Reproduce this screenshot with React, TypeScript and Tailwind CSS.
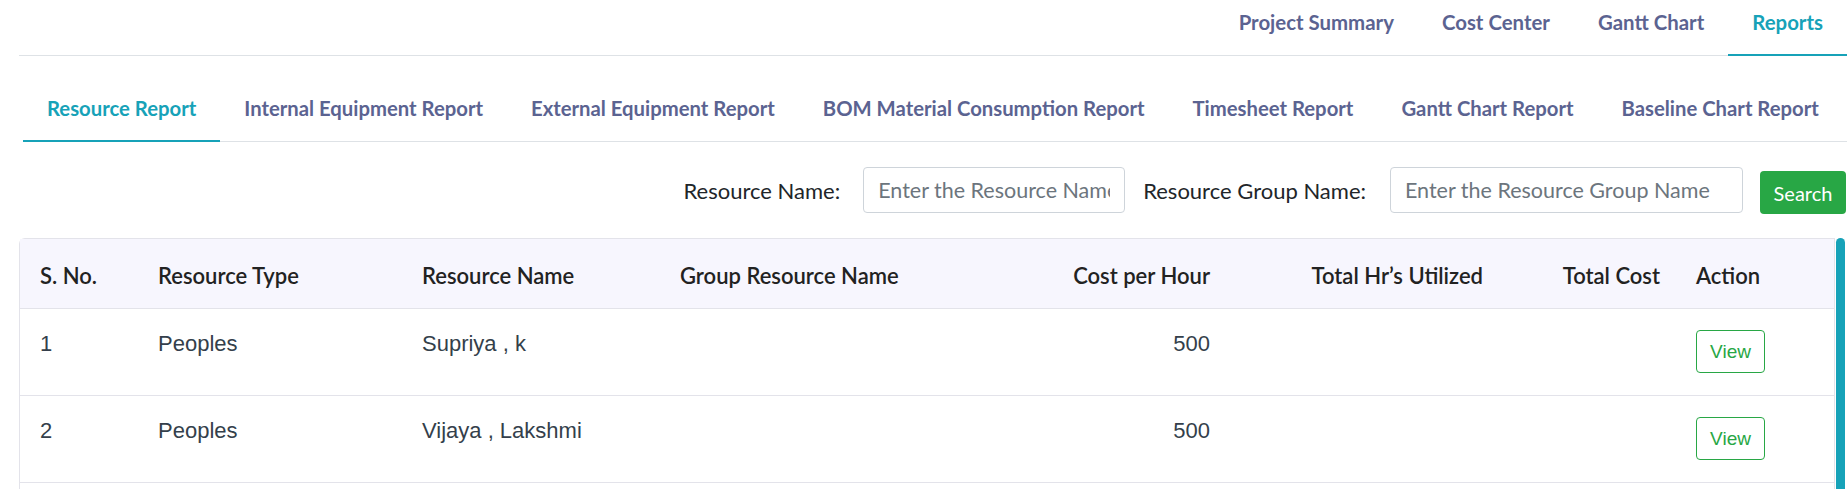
import React from 'react'

// Report page: top project nav, report tabs, filter row and resource table
const topTabs = ['Project Summary', 'Cost Center', 'Gantt Chart', 'Reports']
const reportTabs = [
  'Resource Report',
  'Internal Equipment Report',
  'External Equipment Report',
  'BOM Material Consumption Report',
  'Timesheet Report',
  'Gantt Chart Report',
  'Baseline Chart Report',
]

const rows = [
  { no: 1, type: 'Peoples', name: 'Supriya , k', group: '', cost: '500', hrs: '', total: '' },
  { no: 2, type: 'Peoples', name: 'Vijaya , Lakshmi', group: '', cost: '500', hrs: '', total: '' },
]

const grid = 'grid grid-cols-[118px_264px_258px_241px_329px_273px_177px_1fr]'

export default function App() {
  return (
    <div className="min-h-screen bg-white pl-[19px] font-['Lato',sans-serif]">
      {/* project nav */}
      <div className="flex h-[56px] justify-end border-b border-[#dee2e6]">
        {topTabs.map((t) => {
          const active = t === 'Reports'
          return (
            <div
              key={t}
              className={
                active
                  ? '-mb-px border-b-2 border-[#17a2b8] px-6 pt-[10px] text-[20.4px] leading-6 font-bold text-[#17a2b8]'
                  : '-mb-px border-b-2 border-transparent px-6 pt-[10px] text-[20.4px] leading-6 font-bold text-[#5b6391]'
              }
            >
              {t}
            </div>
          )
        })}
      </div>

      {/* report tabs */}
      <div className="mt-[30px] ml-[4px] flex border-b border-[#dee2e6]">
        {reportTabs.map((t, i) => (
          <div
            key={t}
            className={
              i === 0
                ? '-mb-px border-b-2 border-[#17a2b8] px-6 pt-[10px] pb-[20px] text-[20.3px] leading-6 font-bold text-[#17a2b8]'
                : '-mb-px border-b-2 border-transparent px-6 pt-[10px] pb-[20px] text-[20.3px] leading-6 font-bold text-[#5b6391]'
            }
          >
            {t}
          </div>
        ))}
      </div>

      {/* filters */}
      <div className="mt-[25px] flex items-center justify-end pr-[1px]">
        <label className="mr-[23px] text-[22px] text-[#212529]">Resource Name:</label>
        <input
          className="h-[46px] w-[262px] rounded border border-[#ced4da] px-[14px] text-[21.5px] text-[#495057] outline-none placeholder:text-[#6c757d]"
          placeholder="Enter the Resource Name"
        />
        <label className="mr-[24px] ml-[18px] text-[22px] text-[#212529]">Resource Group Name:</label>
        <input
          className="h-[46px] w-[353px] rounded border border-[#ced4da] px-[14px] text-[21.5px] text-[#495057] outline-none placeholder:text-[#6c757d]"
          placeholder="Enter the Resource Group Name"
        />
        <button className="-mb-px ml-[17px] h-[43px] w-[86px] self-end rounded bg-[#28a745] text-[20px] text-white">
          Search
        </button>
      </div>

      {/* table + scrollbar */}
      <div className="mt-[25px] flex">
        <div className="flex-1 rounded-tl-md border border-b-0 border-[#e3e3ea]">
          <div className={`${grid} h-[70px] items-center border-b border-[#e3e3ea] bg-[#f7f6fe] pt-[4px] text-[22px] font-semibold text-[#222]`}>
            <div className="pl-5">S. No.</div>
            <div className="pl-5">Resource Type</div>
            <div className="pl-5">Resource Name</div>
            <div className="pl-5">Group Resource Name</div>
            <div className="pr-5 text-right">Cost per Hour</div>
            <div className="pr-5 text-right">Total Hr’s Utilized</div>
            <div className="pr-5 text-right">Total Cost</div>
            <div className="pl-4">Action</div>
          </div>
          {rows.map((r) => (
            <div
              key={r.no}
              className={`${grid} h-[87px] items-start border-b border-[#e3e3ea] font-['Liberation_Sans',Arial,sans-serif] text-[22px] leading-[26px] text-[#343f4b]`}
            >
              <div className="pt-[22px] pl-5">{r.no}</div>
              <div className="pt-[22px] pl-5">{r.type}</div>
              <div className="pt-[22px] pl-5">{r.name}</div>
              <div className="pt-[22px] pl-5">{r.group}</div>
              <div className="pt-[22px] pr-5 text-right">{r.cost}</div>
              <div className="pt-[22px] pr-5 text-right">{r.hrs}</div>
              <div className="pt-[22px] pr-5 text-right">{r.total}</div>
              <div className="pt-[21px] pl-4">
                <button className="h-[43px] w-[69px] rounded border border-[#28a745] text-[19px] text-[#28a745]">
                  View
                </button>
              </div>
            </div>
          ))}
          <div className="h-[87px]" />
        </div>
        <div className="ml-[1px] mr-[2px] w-[9px] rounded-t-full bg-[#17a2b8]" />
      </div>
    </div>
  )
}
